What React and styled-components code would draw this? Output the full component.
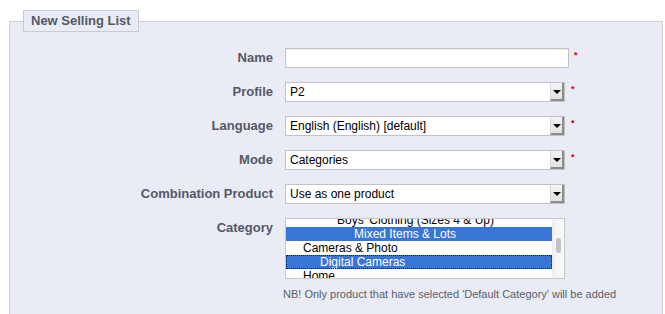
import React from "react";
import styled, { createGlobalStyle } from "styled-components";

const Global = createGlobalStyle`
  html, body { margin: 0; padding: 0; background: #ffffff; overflow: hidden; }
  body { font-family: "Liberation Sans", Arial, sans-serif; }
`;

const Page = styled.div`
  padding: 10px 2px 0 9px;
  height: 314px;
  box-sizing: border-box;
  overflow: hidden;
`;

const Fieldset = styled.fieldset`
  margin: 0;
  border: 1px solid #cdd0d9;
  border-bottom: none;
  background: #e9ecf4;
  padding: 16px 2px 0 13px;
  height: 304px;
  box-sizing: border-box;
`;

const Legend = styled.legend`
  margin: 0;
  padding: 0 7px;
  border: 1px solid #c9ccd6;
  background: #e9ecf4;
  font: bold 13px/20px "Liberation Sans", Arial, sans-serif;
  color: #555866;
`;

const Form = styled.div`
  display: grid;
  grid-template-columns: 250px 1fr;
  column-gap: 12px;
  row-gap: 14px;
  align-items: start;
`;

const Label = styled.div`
  text-align: right;
  font: bold 13px/20px "Liberation Sans", Arial, sans-serif;
  color: #555866;
`;

const Field = styled.div`
  display: flex;
  align-items: flex-start;
  gap: ${(p) => p.$gap || 0}px;
  flex-direction: ${(p) => (p.$column ? "column" : "row")};
`;

const Required = styled.span`
  color: #dd0000;
  font: bold 9px/9px "Liberation Sans", Arial, sans-serif;
  margin-left: ${(p) => p.$ml}px;
  margin-top: 3px;
`;

const TextInput = styled.div`
  width: 284px;
  height: 20px;
  box-sizing: border-box;
  background: #fff;
  border: 1px solid #c4c4c4;
  box-shadow: inset 0 1px 1px rgba(0, 0, 0, 0.08);
`;

const SelectBox = styled.div`
  width: 280px;
  height: 20px;
  box-sizing: border-box;
  background: #fff;
  border: 1px solid #c2c2c2;
  display: flex;
  align-items: stretch;
`;

const SelectText = styled.span`
  flex: 1;
  padding-left: 4px;
  font: 12px/18px "Liberation Sans", Arial, sans-serif;
  color: #000;
  white-space: nowrap;
  overflow: hidden;
`;

const SelectButton = styled.span`
  width: 14px;
  box-sizing: border-box;
  background: linear-gradient(#f4f4f4, #e2e2e2);
  border-left: 1px solid #d8d8d8;
  border-right: 2px solid #8c8c8c;
  border-bottom: 2px solid #8c8c8c;
  display: flex;
  align-items: center;
  justify-content: center;
  padding-top: 2px;
`;

const Arrow = styled.span`
  width: 0;
  height: 0;
  border-left: 4px solid transparent;
  border-right: 4px solid transparent;
  border-top: 4px solid #000;
`;

const ListBox = styled.div`
  width: 280px;
  height: 61px;
  box-sizing: border-box;
  background: #fff;
  border: 1px solid #c6c6c6;
  display: flex;
  overflow: hidden;
`;

const ListItems = styled.div`
  flex: 1;
  margin-top: -6px;
`;

const Option = styled.div`
  height: 14px;
  box-sizing: border-box;
  padding-left: ${(p) => p.$level * 17}px;
  font: 12px/14px "Liberation Sans", Arial, sans-serif;
  white-space: nowrap;
  color: ${(p) => (p.$selected ? "#ffffff" : "#000000")};
  background: ${(p) => (p.$selected ? "#3875d7" : "transparent")};
  outline: ${(p) => (p.$focus ? "1px dotted #0a1f6e" : "none")};
  outline-offset: -1px;
`;

const ScrollTrack = styled.div`
  width: 11px;
  background: linear-gradient(90deg, #f2f2f2, #fafafa);
  border-left: 1px solid #ececec;
  display: flex;
  justify-content: center;
  padding-top: 19px;
`;

const ScrollThumb = styled.div`
  width: 5px;
  height: 15px;
  border-radius: 3px;
  background: #c3c3c3;
`;

const Note = styled.div`
  margin-left: -2px;
  font: 11px/13px "Liberation Sans", Arial, sans-serif;
  color: #5b5e6b;
  white-space: nowrap;
`;

function Select({ value, required }) {
  return (
    <Field>
      <SelectBox>
        <SelectText>{value}</SelectText>
        <SelectButton>
          <Arrow />
        </SelectButton>
      </SelectBox>
      {required && <Required $ml={6}>*</Required>}
    </Field>
  );
}

const categories = [
  { label: "Boys' Clothing (Sizes 4 & Up)", level: 3 },
  { label: "Mixed Items & Lots", level: 4, selected: true },
  { label: "Cameras & Photo", level: 1 },
  { label: "Digital Cameras", level: 2, selected: true, focus: true },
  { label: "Home", level: 1 },
];

export default function App() {
  return (
    <Page>
      <Global />
      <Fieldset>
        <Legend>New Selling List</Legend>
        <Form>
          <Label>Name</Label>
          <Field>
            <TextInput />
            <Required $ml={5}>*</Required>
          </Field>

          <Label>Profile</Label>
          <Select value="P2" required />

          <Label>Language</Label>
          <Select value="English (English) [default]" required />

          <Label>Mode</Label>
          <Select value="Categories" required />

          <Label>Combination Product</Label>
          <Select value="Use as one product" />

          <Label>Category</Label>
          <Field $column $gap={9}>
            <ListBox>
              <ListItems>
                {categories.map((c) => (
                  <Option
                    key={c.label}
                    $level={c.level}
                    $selected={c.selected}
                    $focus={c.focus}
                  >
                    {c.label}
                  </Option>
                ))}
              </ListItems>
              <ScrollTrack>
                <ScrollThumb />
              </ScrollTrack>
            </ListBox>
            <Note>
              NB! Only product that have selected 'Default Category' will be added
            </Note>
          </Field>
        </Form>
      </Fieldset>
    </Page>
  );
}
